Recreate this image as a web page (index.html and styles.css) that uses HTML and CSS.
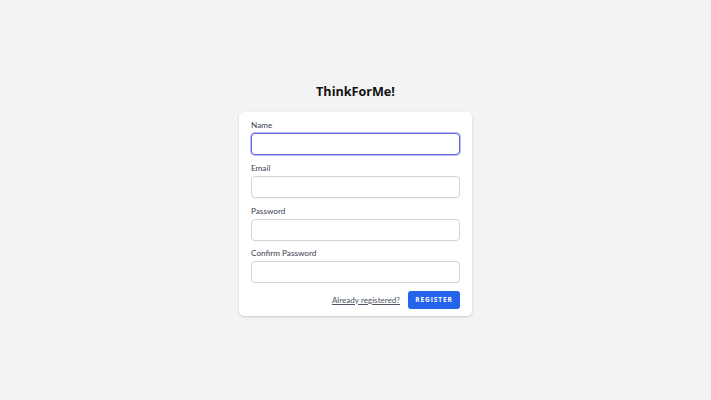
FILE: index.html
```html
<!DOCTYPE html>
<html lang="en">
<head>
<meta charset="utf-8">
<title>ThinkForMe! - Register</title>
<link rel="stylesheet" href="styles.css">
</head>
<body>
<main class="page">
  <h1 class="brand">ThinkForMe!</h1>
  <form class="card">
    <div class="field">
      <label class="label" for="name">Name</label>
      <input class="input input-focus" id="name" type="text">
    </div>
    <div class="field">
      <label class="label" for="email">Email</label>
      <input class="input" id="email" type="email">
    </div>
    <div class="field">
      <label class="label" for="password">Password</label>
      <input class="input" id="password" type="password">
    </div>
    <div class="field">
      <label class="label" for="confirm">Confirm Password</label>
      <input class="input" id="confirm" type="password">
    </div>
    <div class="actions">
      <a class="link" href="#">Already registered?</a>
      <button class="btn" type="button">Register</button>
    </div>
  </form>
</main>
</body>
</html>
```
FILE: styles.css
```css
* { box-sizing: border-box; }
html, body { margin: 0; padding: 0; }
body {
  background: #f3f3f3;
  font-family: "Open Sans", "Noto Sans", sans-serif;
  color: #111827;
}
.page {
  min-height: 100vh;
  padding-bottom: 2px;
  display: flex;
  flex-direction: column;
  align-items: center;
  justify-content: center;
}
.brand {
  margin: 0 0 10px;
  font-family: "Open Sans", "Noto Sans", sans-serif;
  font-size: 12.6px;
  line-height: 20px;
  font-weight: 700;
  color: #111111;
}
.card {
  width: 233px;
  background: #ffffff;
  border-radius: 5px;
  box-shadow: 0 1px 3px rgba(0,0,0,0.12), 0 1px 2px rgba(0,0,0,0.06);
  padding: 7px 12px 7px;
  display: flex;
  flex-direction: column;
  gap: 6.7px;
}
.field {
  display: flex;
  flex-direction: column;
}
.label {
  font-family: "Lato", "Open Sans", sans-serif;
  font-size: 8.2px;
  line-height: 12px;
  color: #3a4150;
  margin-bottom: 2px;
}
.input {
  height: 22px;
  border: 1px solid #d1d5db;
  border-radius: 4px;
  background: #fff;
  box-shadow: 0 1px 1px rgba(0,0,0,0.04);
  font: inherit;
  outline: none;
}
.input-focus {
  border-color: #6366f1;
  box-shadow: 0 0 0 1px rgba(99,102,241,0.45);
}
.actions {
  margin-top: 1px;
  display: flex;
  justify-content: flex-end;
  align-items: center;
  gap: 8px;
}
.link {
  font-family: "Lato", "Open Sans", sans-serif;
  font-size: 8.1px;
  color: #4b5563;
  text-decoration: underline;
}
.btn {
  height: 18px;
  width: 52px;
  padding: 0;
  border: none;
  border-radius: 3px;
  background: #2563eb;
  color: #ffffff;
  font-family: "Open Sans", "Noto Sans", sans-serif;
  font-size: 6.5px;
  font-weight: 700;
  letter-spacing: 0.9px;
  text-transform: uppercase;
}
```
